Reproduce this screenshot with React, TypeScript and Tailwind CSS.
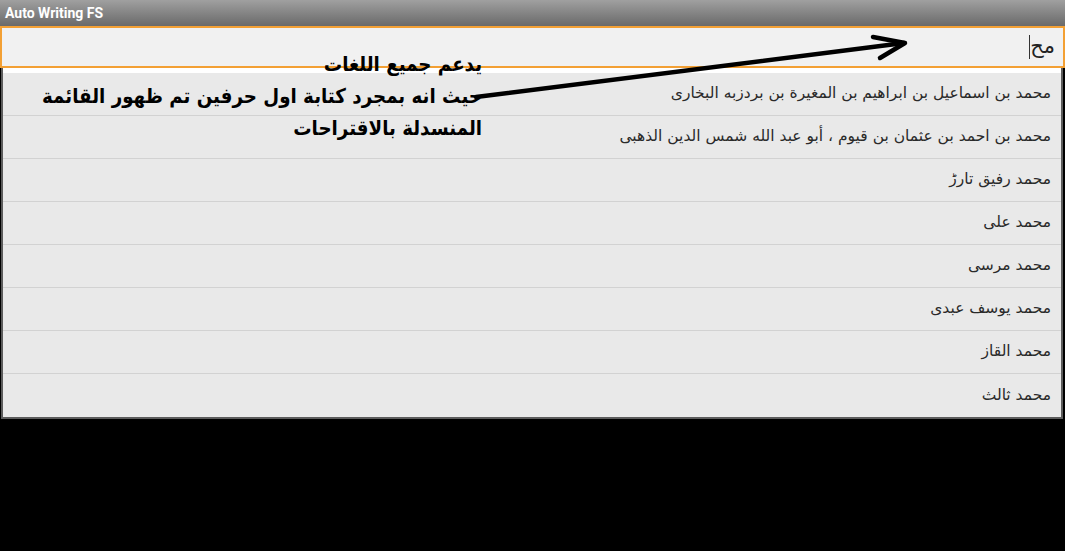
import React from "react";

const items = [
  "محمد بن اسماعيل بن ابراهيم بن المغيرة بن بردزبه البخارى",
  "محمد بن احمد بن عثمان بن قيوم ، أبو عبد الله شمس الدين الذهبى",
  "محمد رفيق تارڑ",
  "محمد على",
  "محمد مرسى",
  "محمد يوسف عبدى",
  "محمد القاز",
  "محمد ثالث",
];

export default function App() {
  return (
    <div className="relative w-[1065px] h-[551px] bg-black overflow-hidden flex flex-col">
      <div className="h-[26px] shrink-0 bg-gradient-to-b from-[#a0a0a0] to-[#6a6a6a] flex items-center px-[5px] text-white font-bold text-[14px] [font-family:Roboto,'DejaVu_Sans',sans-serif]">
        Auto Writing FS
      </div>
      <div
        dir="rtl"
        className="h-[42px] shrink-0 border-2 border-[#f3a034] bg-[#f1f1f1] flex items-center pr-[8px] [font-family:'DejaVu_Sans',sans-serif] text-[21px] text-[#222]"
      >
        <span>مح</span>
        <span className="inline-block w-[1px] h-[24px] bg-[#333] ml-[1px]"></span>
      </div>
      <div className="ml-[1px] w-[1062px] shrink-0 bg-[#e9e9e9] border-l-2 border-r-2 border-b-2 border-[#5c5c5c] flex flex-col">
        <div className="h-[5px] bg-white"></div>
        {items.map((t, i) => (
          <div
            key={i}
            dir="rtl"
            className={`h-[43px] flex items-center pr-[10px] text-[15.5px] text-[#2a2a2a] [font-family:'DejaVu_Sans',sans-serif] ${
              i < items.length - 1 ? "border-b border-[#d2d2d2]" : ""
            }`}
          >
            {t}
          </div>
        ))}
      </div>

      <div
        dir="rtl"
        className="absolute left-0 top-[48px] w-[482px] text-right whitespace-nowrap font-bold text-[20.3px] leading-[32px] text-black [font-family:'DejaVu_Sans_Condensed','DejaVu_Sans',sans-serif]"
      >
        <div>يدعم جميع اللغات</div>
        <div>حيث انه بمجرد كتابة اول حرفين تم ظهور القائمة</div>
        <div>المنسدلة بالاقتراحات</div>
      </div>

      <svg className="absolute left-0 top-0" width="1065" height="551" viewBox="0 0 1065 551">
        <path d="M476 97 L904 43" stroke="black" strokeWidth="4.5" strokeLinecap="round" fill="none" />
        <path d="M873 37 L905 43 L880 58" stroke="black" strokeWidth="4.5" strokeLinecap="round" strokeLinejoin="round" fill="none" />
      </svg>
    </div>
  );
}
